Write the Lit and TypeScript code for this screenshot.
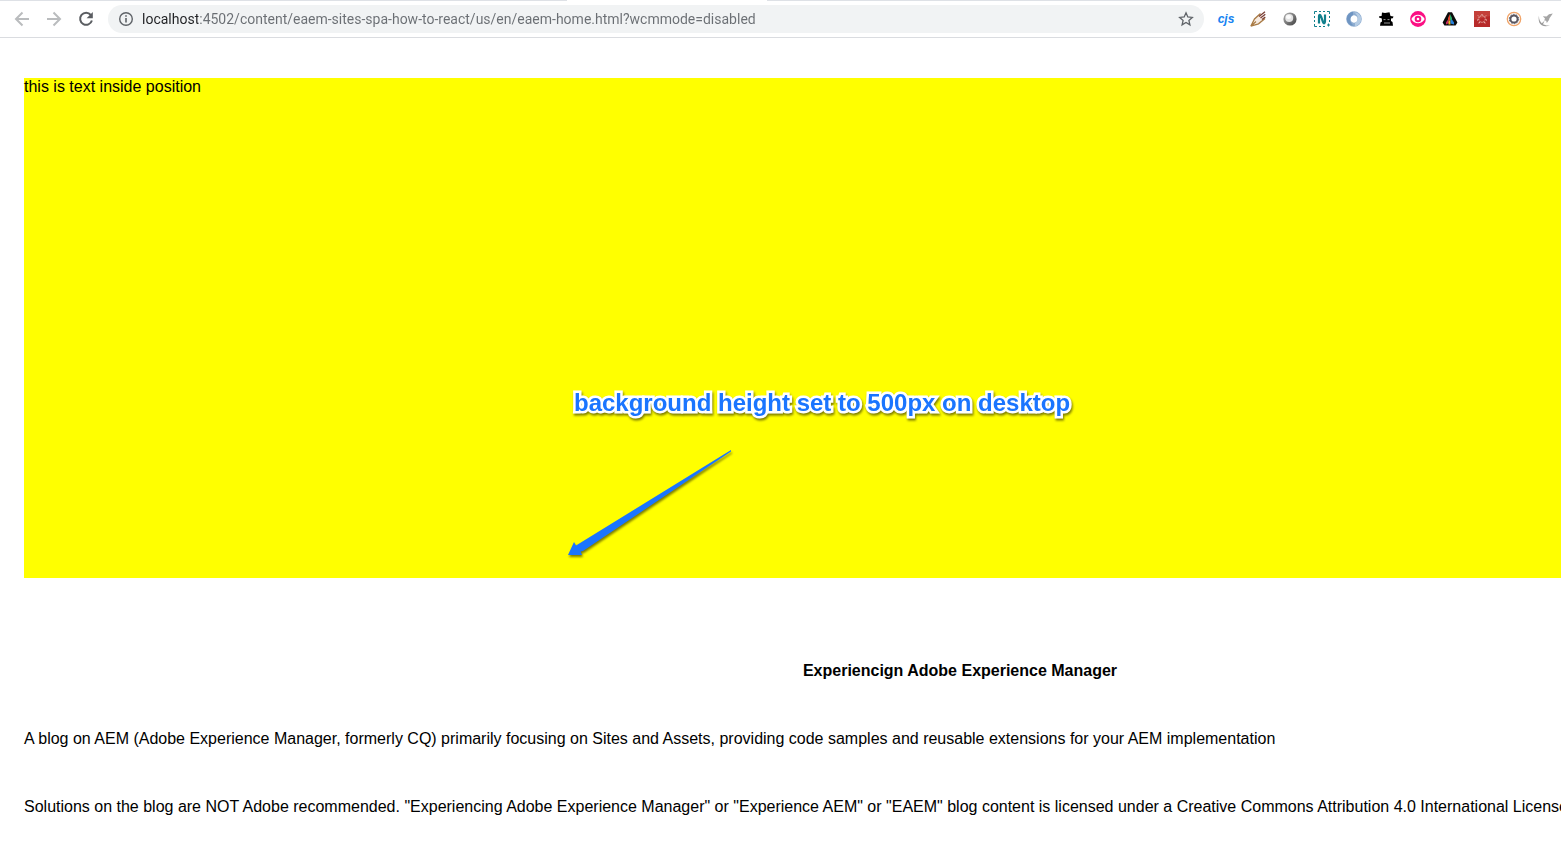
import { LitElement, html, css, svg } from "lit";
import { customElement } from "lit/decorators.js";

const extensions = [
  {
    name: "Custom JavaScript",
    icon: html`<span class="cjs">cjs</span>`,
  },
  {
    name: "Page ruler",
    icon: html`<svg viewBox="0 0 16 16">
      <path d="M2 14 5.500 7 10 3 13 8 9 12Z" fill="#f8ece2" />
      <path d="M.8 15.200 4.500 8 10.500 2.500M.8 15.200 8.500 12.800 15 7.500M.8 15.200 6 10.500" fill="none" stroke="#a97b45" stroke-width="1.300" />
      <path d="M9 5.500 15 .8M10.500 7 15.300 3.200M12 8.500 15.300 6" fill="none" stroke="#7a3f36" stroke-width="1.300" />
    </svg>`,
  },
  {
    name: "Sphere",
    icon: html`<svg viewBox="0 0 16 16">
      <defs>
        <linearGradient id="ball" x1="0" y1="0" x2="1" y2="1">
          <stop offset="0" stop-color="#b5b5b5" />
          <stop offset="1" stop-color="#3f3f3f" />
        </linearGradient>
      </defs>
      <circle cx="8" cy="8" r="6.600" fill="url(#ball)" />
      <ellipse cx="7.200" cy="7" rx="4" ry="3.900" fill="#e4e4e4" />
      <ellipse cx="6.500" cy="6" rx="2.600" ry="2" fill="#fbfbfb" />
    </svg>`,
  },
  {
    name: "Nimbus capture",
    icon: html`<svg viewBox="0 0 16 16" fill="none" stroke="#11808c">
      <path d="M.5 3V.5H3M5 .5h2M9 .5h2M13 .5h2.500V3M15.500 5v2M15.500 9v2M.5 5v2M.5 9v2M.5 13v2.500H3M5 15.500h2M9 15.500h2" />
      <path d="M14.500 12.500v3M13 14h3" />
      <path d="M5 12.500V5.500C5 3 6.500 3.500 7 5.500L9 11C9.800 13 11 12.500 11 10.500V3.500" stroke-width="2.200" />
    </svg>`,
  },
  {
    name: "JSON viewer",
    icon: html`<svg viewBox="0 0 16 16" fill="none">
      <circle cx="8" cy="8" r="5.700" stroke="#8dacd0" stroke-width="4.200" />
      <path d="M7 .8C2 1.500-.5 7 1.500 11 3 14 6 15 8 14.500 3.500 12.500 3 6 7 4Z" fill="#6f95c2" />
      <path d="M9 15.200C14 14.500 16.500 9 14.500 5 13 2 10 1 8 1.500 12.500 3.500 13 10 9 12Z" fill="#b5cce4" />
      <ellipse cx="8" cy="8" rx="2.600" ry="3.600" fill="#fff" />
    </svg>`,
  },
  {
    name: "User agent",
    icon: html`<svg viewBox="0 0 16 16">
      <path d="M4 1.500 7 2 11.500 1.200 12.500 5 15.500 5.600 14.800 7.200 13 7.500V10L14.500 11 15 14.800H2L2.500 11.500 4 10.500 3.800 7.500 1 6.600 1.200 5.200 3.600 5Z" fill="#000" />
      <path d="M5.500 8.600H7.500M9.500 8.600H11.500M6 12H12" stroke="#fff" stroke-width=".6" />
    </svg>`,
  },
  {
    name: "Eye",
    icon: html`<svg viewBox="0 0 16 16">
      <circle cx="8" cy="8" r="7.900" fill="#fb0f83" />
      <path d="M1.300 8C4.500 2.200 11.500 2.200 14.700 8 11.500 13.800 4.500 13.800 1.300 8Z" fill="#fff" />
      <circle cx="8" cy="8" r="3.300" fill="#fb0f83" />
      <circle cx="8" cy="8" r="1.300" fill="#fff" />
    </svg>`,
  },
  {
    name: "Color rocket",
    icon: html`<svg viewBox="0 0 16 16">
      <path d="M6 1.200H10L15.400 11.500 13.600 14.400H2.400L.6 11.500Z" fill="#0c0c0c" />
      <path d="M8 3 6 7V9.500H8Z" fill="#e5462c" />
      <path d="M8 3 10 7V9.500H8Z" fill="#2cab69" />
      <path d="M6 8.500 4 11.500V13.500L7 12Z" fill="#cc2c64" />
      <path d="M6.500 9.500H8.500V13.500H6.500Z" fill="#efbe20" />
      <path d="M8.500 9.500 10 8.500 12 11.500V13.500L8.500 12.500Z" fill="#2681dc" />
    </svg>`,
  },
  {
    name: "Red badge",
    icon: html`<svg viewBox="0 0 16 16">
      <path d="M0 0H16V16H0Z" fill="#b72a2a" />
      <path d="M0 0H16V5L0 9Z" fill="#c4403a" />
      <circle cx="8" cy="8" r="3.300" fill="none" stroke="#f0c4be" stroke-dasharray="1.400 .8" />
      <path d="M4 4.500 5 5.500M12 4.500 11 5.500M8 3V4M3 9H4M13 9H12M4.500 12 6 11.500M11.500 12 10 11.500" stroke="#f0c4be" />
    </svg>`,
  },
  {
    name: "Gear ring",
    icon: html`<svg viewBox="0 0 16 16" fill="none">
      <circle cx="8" cy="8" r="6.700" stroke="#f1a468" stroke-width="1.300" />
      <circle cx="8" cy="8" r="3.600" stroke="#595660" stroke-width="2" />
      <circle cx="8" cy="8" r="4.700" stroke="#595660" stroke-dasharray="1.500 1.450" />
    </svg>`,
  },
  {
    name: "Rocket",
    icon: html`<svg viewBox="0 0 16 16">
      <path d="M14.800 2.500 11 3.200 8.500 5.500 4.800 5.200 7 7.500 6.200 9.500 8.200 9.800 8.800 12 11 9 11.500 7.200Z" fill="#a5a5a5" />
      <path d="M1 4.500C.8 8 1.800 10.500 3.800 12.200L6.500 9.800 5 13.200 8.500 14.500H12C7 16.300 2.800 15 1.300 11.500.5 9 .5 6.500 1 4.500Z" fill="#9b9b9b" />
    </svg>`,
  },
];

const arrowShape = svg`<path d="M164 1 164 2.500 16 102 13.500 102.500 15 106 1 106 7 93 9 96.500Z" />`;

@customElement("browser-toolbar")
export class BrowserToolbar extends LitElement {
  static styles = css`
    :host {
      display: block;
      overflow: hidden;
      font-family: Roboto, "Noto Sans", sans-serif;
    }
    .tabs {
      display: grid;
      grid-template-columns: 567fr 200px 794fr;
      height: 1px;
    }
    .strip {
      background: #dee1e6;
    }
    .bar {
      display: flex;
      align-items: center;
      height: 36px;
      padding-left: 6px;
      border-bottom: 1px solid #dadce0;
      background: #fff;
    }
    button {
      display: flex;
      flex: none;
      align-items: center;
      justify-content: center;
      width: 32px;
      height: 28px;
      padding: 0;
      border: 0;
      background: none;
      font: inherit;
    }
    svg {
      display: block;
      width: 16px;
      height: 16px;
    }
    .line {
      fill: none;
      stroke: #babcbe;
      stroke-width: 2;
    }
    .address {
      display: flex;
      flex: 1;
      align-items: center;
      min-width: 0;
      height: 28px;
      margin: 0 6px;
      padding-left: 10px;
      border-radius: 14px;
      background: #f1f3f4;
    }
    .address label {
      margin-right: 8px;
    }
    .address input {
      flex: 1;
      min-width: 0;
      height: 20px;
      padding: 0;
      border: 0;
      outline: 0;
      color: #5f6368;
      font: 14px/20px Roboto, "Noto Sans", sans-serif;
      background: linear-gradient(90deg, #202124 56px, #6a6e73 56px);
      -webkit-background-clip: text;
      background-clip: text;
      -webkit-text-fill-color: transparent;
    }
    .extensions {
      display: flex;
      flex: none;
      margin-right: -1px;
    }
    .cjs {
      color: #1583f2;
      font: italic bold 12px/16px "Liberation Sans", sans-serif;
    }
    .star {
      width: 36px;
    }
  `;

  render() {
    return html`
      <div class="tabs"><span class="strip"></span><span></span><span class="strip"></span></div>
      <div class="bar">
        <button aria-label="Back">
          <svg viewBox="0 0 16 16" class="line"><path d="M15 8H2M8.500 1.500 2 8l6.500 6.500" /></svg>
        </button>
        <button aria-label="Forward">
          <svg viewBox="0 0 16 16" class="line"><path d="M1 8H14M7.500 1.500 14 8l-6.500 6.500" /></svg>
        </button>
        <button aria-label="Reload">
          <svg viewBox="0 0 16 16">
            <path d="M12.800 4A6 6 0 1 0 13.900 9.500" fill="none" stroke="#5a5d61" stroke-width="2" />
            <path d="M14.800 1V7.200H8.600Z" fill="#5a5d61" />
          </svg>
        </button>
        <div class="address">
          <label for="url" aria-label="Address">
            <svg viewBox="0 0 16 16">
              <circle cx="8" cy="8" r="6.300" fill="none" stroke="#5f6368" stroke-width="1.400" />
              <path d="M7.200 7H8.800V11.500H7.200ZM7.200 4.300H8.800V5.800H7.200Z" fill="#5f6368" />
            </svg>
          </label>
          <input
            id="url"
            type="text"
            spellcheck="false"
            .value=${"localhost:4502/content/eaem-sites-spa-how-to-react/us/en/eaem-home.html?wcmmode=disabled"}
          />
          <button class="star" aria-label="Bookmark this page">
            <svg viewBox="0 0 16 16">
              <path
                d="M8 1.800 9.800 6 14.300 6.400 10.900 9.400 11.900 13.900 8 11.500 4.100 13.900 5.100 9.400 1.700 6.400 6.200 6Z"
                fill="none" stroke="#5f6368" stroke-width="1.300"
              />
            </svg>
          </button>
        </div>
        <div class="extensions">
          ${extensions.map((e) => html`<button aria-label=${e.name}>${e.icon}</button>`)}
        </div>
      </div>
    `;
  }
}

@customElement("app-root")
export class AppRoot extends LitElement {
  static styles = css`
    :host {
      display: block;
      min-height: 100vh;
      overflow: hidden;
      background: #fff;
      color: #000;
      font: 16px/18px "Liberation Sans", Arial, sans-serif;
    }
    main {
      min-width: 1872px;
      padding: 40px 24px 0;
    }
    .position {
      position: relative;
      height: 500px;
      background: #ff0;
    }
    p {
      margin: 0;
    }
    .note {
      position: absolute;
      top: 311px;
      left: 550px;
      color: #1a75ff;
      font-size: 24px;
      font-weight: bold;
      line-height: 28px;
      white-space: nowrap;
      -webkit-text-stroke: 5px #fff;
      paint-order: stroke fill;
      filter: drop-shadow(1px 2px 1px rgba(0, 0, 0, 0.5));
    }
    .arrow {
      position: absolute;
      top: 371px;
      left: 543px;
      width: 165px;
      height: 108px;
      overflow: visible;
      fill: #1a75ff;
      filter: drop-shadow(1px 2px 1px rgba(0, 0, 0, 0.5));
    }
    .blog {
      display: grid;
      gap: 50px;
      padding-top: 84px;
    }
    h1 {
      margin: 0;
      font-size: 16px;
      line-height: 18px;
      text-align: center;
    }
  `;

  render() {
    return html`
      <browser-toolbar></browser-toolbar>
      <main>
        <section class="position">
          <p>this is text inside position</p>
          <p class="note">background height set to 500px on desktop</p>
          <svg class="arrow" viewBox="0 0 165 108" aria-hidden="true">${arrowShape}</svg>
        </section>
        <section class="blog">
          <h1>Experiencign Adobe Experience Manager</h1>
          <p>
            A blog on AEM (Adobe Experience Manager, formerly CQ) primarily focusing on Sites and Assets, providing code
            samples and reusable extensions for your AEM implementation
          </p>
          <p>
            Solutions on the blog are NOT Adobe recommended. "Experiencing Adobe Experience Manager" or "Experience AEM"
            or "EAEM" blog content is licensed under a Creative Commons Attribution 4.0 International License
          </p>
        </section>
      </main>
    `;
  }
}
